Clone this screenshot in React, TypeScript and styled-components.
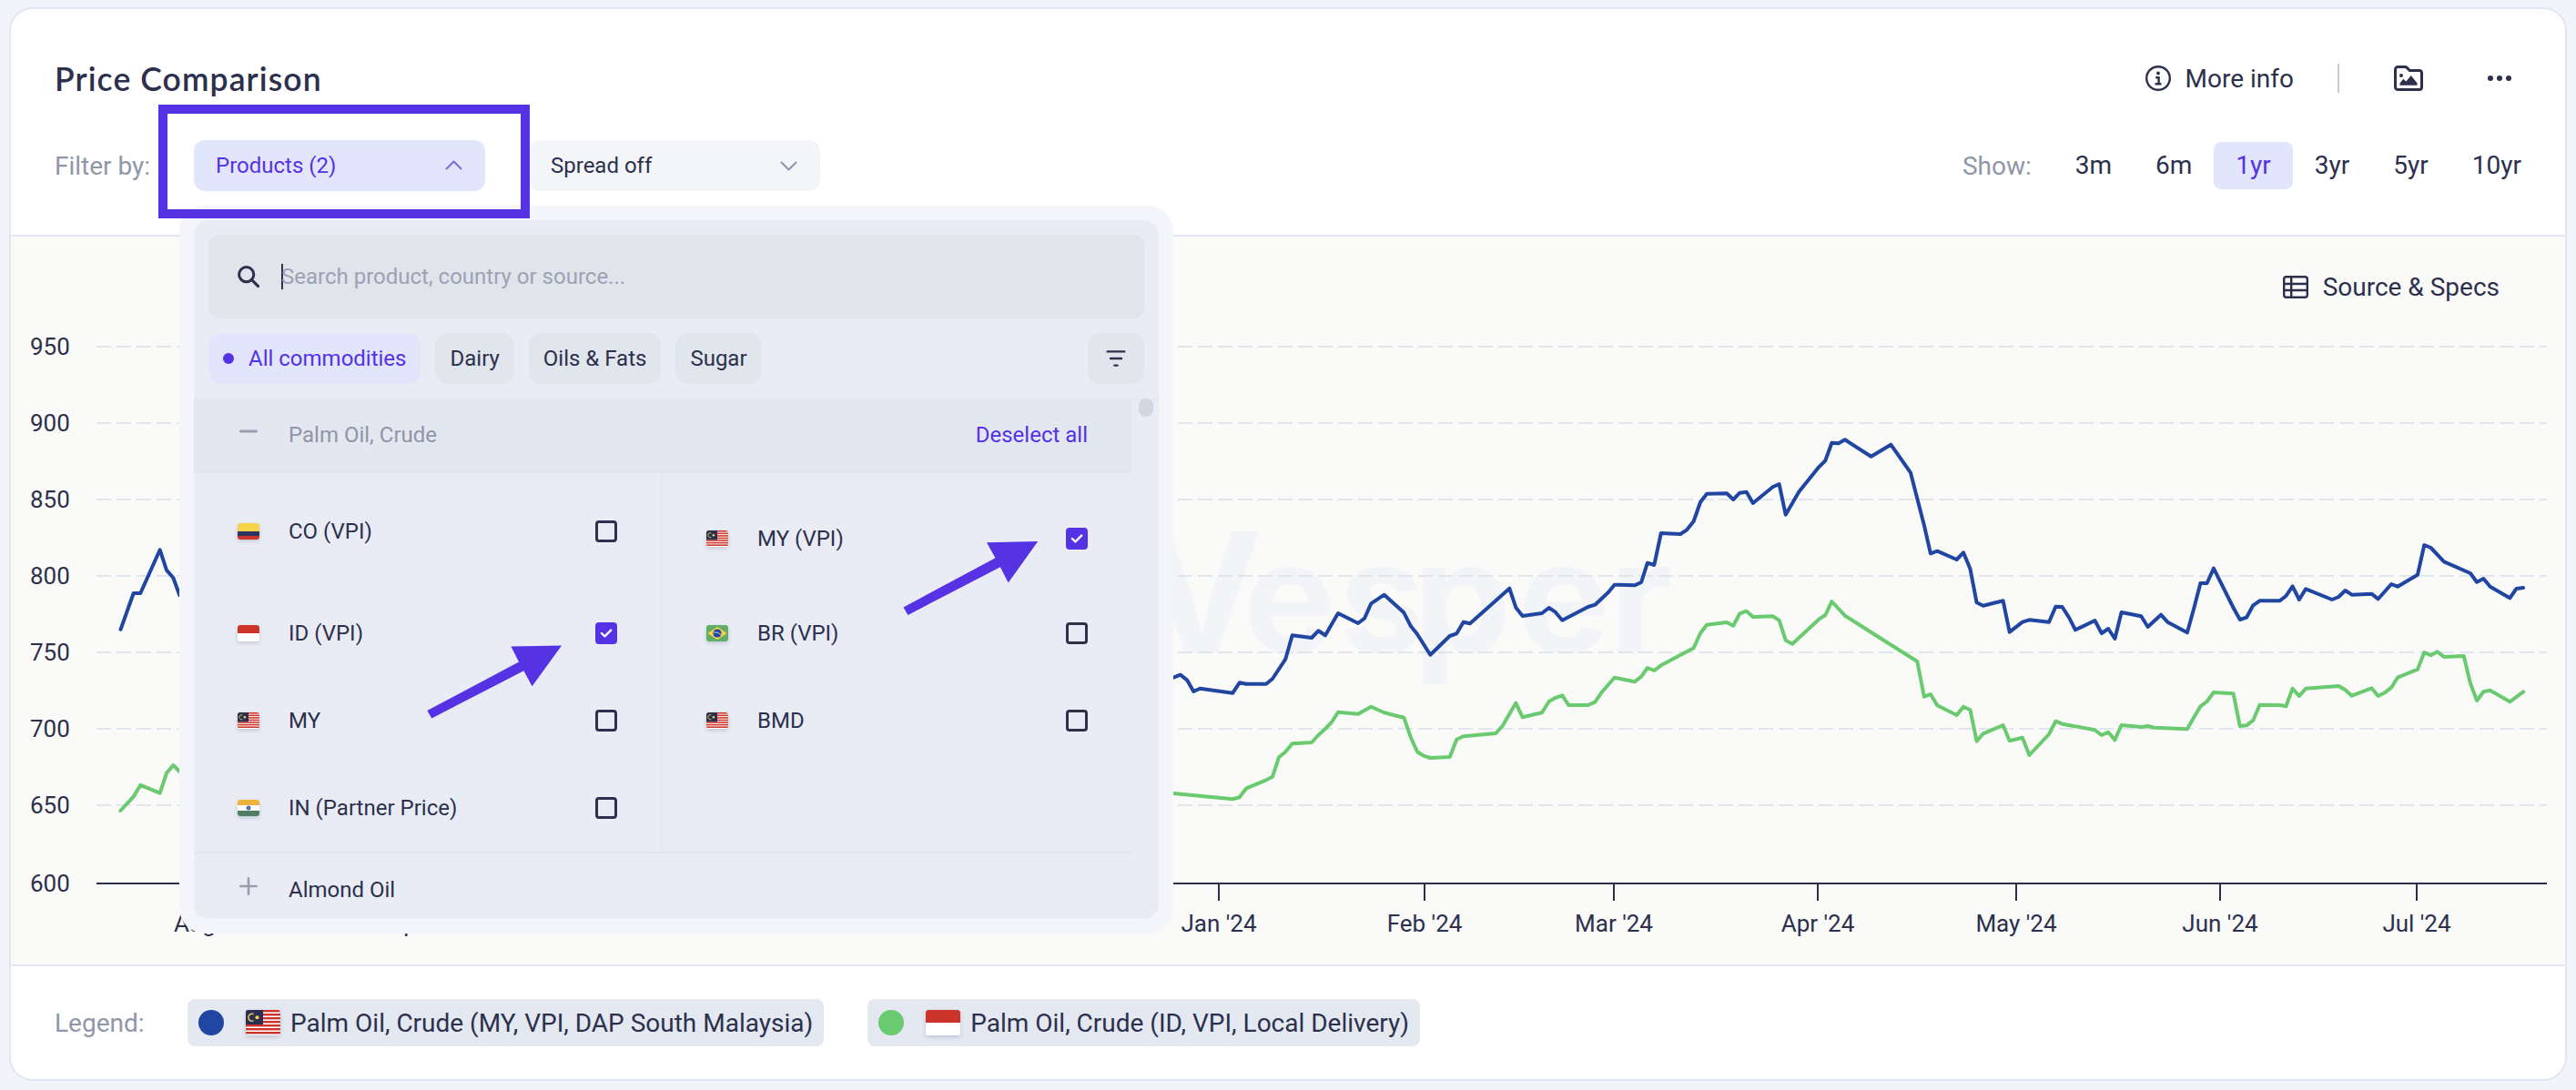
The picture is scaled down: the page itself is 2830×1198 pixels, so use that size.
import React from 'react'
import styled, { createGlobalStyle } from 'styled-components'

const NAVY = '#2c304d'
const PURPLE = '#5632e5'
const MUTED = '#8f96a9'

const GlobalStyle = createGlobalStyle`
  * {
    box-sizing: border-box;
  }
  body {
    margin: 0;
    background: #f3f4f9;
    color: ${NAVY};
    font-family: Roboto, 'Liberation Sans', sans-serif;
    font-size: 28px;
  }
`
const Page = styled.main`
  height: 1198px;
  padding: 8px 10px 10px;
`
const Card = styled.section`
  display: flex;
  flex-direction: column;
  height: 1180px;
  border: 2px solid #e2e6f0;
  border-radius: 26px;
  background: #fff;
`
const Header = styled.header`
  display: flex;
  flex-direction: column;
  gap: 44px;
  height: 250px;
  padding-top: 52px;
  border-bottom: 2px solid #e2e6f0;
`
const TitleRow = styled.div`
  display: flex;
  align-items: center;
  height: 48px;
  padding: 0 59px 0 48px;
`
const Title = styled.h1`
  flex: 1;
  margin: 0;
  font-family: Lato, sans-serif;
  font-weight: 600;
  font-size: 35.5px;
  letter-spacing: 1.1px;
  white-space: nowrap;
`
const MoreInfo = styled.div`
  display: flex;
  align-items: center;
  gap: 16px;
`
const Divider = styled.div`
  width: 2px;
  height: 32px;
  margin: 0 60px 0 48px;
  background: #c6cfd9;
`
const MoreDots = styled.svg`
  margin-left: 71px;
`
const ControlsRow = styled.div`
  display: flex;
  align-items: center;
  height: 56px;
  padding: 0 24px 0 48px;
`
const Label = styled.span<{ width?: number }>`
  width: ${({ width }) => (width ? `${width}px` : 'auto')};
  color: ${MUTED};
`
const FilterWrap = styled.div`
  position: relative;
  margin-right: 48px;
`
const Select = styled.div<{ active?: boolean }>`
  display: flex;
  align-items: center;
  justify-content: space-between;
  width: 320px;
  height: 56px;
  padding: 0 25px 0 24px;
  border-radius: 12px;
  font-size: 24px;
  background: ${({ active }) => (active ? '#e2e6fd' : '#f3f5f9')};
  color: ${({ active }) => (active ? PURPLE : NAVY)};
`
const Ranges = styled.div`
  display: flex;
  align-items: center;
  margin-left: auto;
`
const Range = styled.div<{ active?: boolean }>`
  height: 52px;
  padding: 0 24px;
  border-radius: 8px;
  line-height: 52px;
  background: ${({ active }) => (active ? '#e2e6fd' : 'transparent')};
  color: ${({ active }) => (active ? PURPLE : NAVY)};
`
const RangeLabel = styled(Label)`
  margin-right: 24px;
`
const ChartArea = styled.div`
  position: relative;
  height: 802px;
  border-bottom: 2px solid #e2e6f0;
  background: #fafaf8;
`
const ChartSvg = styled.svg`
  display: block;
  width: 2806px;
  height: 800px;
  font-size: 26px;
`
const SourceLink = styled.div`
  position: absolute;
  top: 35px;
  right: 72px;
  display: flex;
  align-items: center;
  gap: 16px;
  height: 40px;
`
const Legend = styled.footer`
  display: flex;
  align-items: center;
  height: 124px;
  padding: 0 48px;
  gap: 48px;
`
const LegendChip = styled.div`
  display: flex;
  align-items: center;
  height: 52px;
  padding: 0 12px;
  border-radius: 8px;
  background: #e4e8f1;
  white-space: nowrap;
`
const Dot = styled.span<{ size: number; color: string }>`
  width: ${({ size }) => size}px;
  height: ${({ size }) => size}px;
  border-radius: 50%;
  background: ${({ color }) => color};
`
const LegendFlag = styled.div`
  display: flex;
  margin: 0 11px 0 24px;
`

/* product picker */
const Dropdown = styled.div`
  position: absolute;
  z-index: 2;
  top: 72px;
  left: -16px;
  width: 1092px;
  height: 800px;
  padding: 16px;
  border-radius: 28px;
  background: #f3f5fa;
  font-size: 24px;
`
const Panel = styled.div`
  height: 768px;
  overflow: hidden;
  border-radius: 16px;
  background: #e9ecf5;
`
const PanelTop = styled.div`
  display: flex;
  flex-direction: column;
  gap: 16px;
  padding: 16px;
`
const Search = styled.div`
  display: flex;
  align-items: center;
  height: 92px;
  padding: 0 32px;
  border-radius: 12px;
  background: #e0e4eb;
`
const Caret = styled.span`
  width: 2px;
  height: 28px;
  margin: 0 -2px 0 24px;
  background: ${NAVY};
`
const Placeholder = styled.span`
  color: #9ca2b5;
`
const Tags = styled.div`
  display: flex;
  gap: 16px;
`
const Tag = styled.div<{ active?: boolean }>`
  display: flex;
  align-items: center;
  gap: 16px;
  height: 56px;
  padding: 0 16px;
  border-radius: 14px;
  white-space: nowrap;
  background: ${({ active }) => (active ? '#e2e6fd' : '#e1e5ec')};
  color: ${({ active }) => (active ? PURPLE : NAVY)};
`
const SortButton = styled(Tag)`
  justify-content: center;
  width: 62px;
  margin-left: auto;
`
const ListArea = styled.div`
  display: flex;
`
const List = styled.div`
  width: 1030px;
`
const Track = styled.div`
  flex: 1;
  padding-left: 8px;
  border-top: 2px solid #e3e7f0;
`
const Thumb = styled.div`
  width: 16px;
  height: 20px;
  margin-top: -2px;
  border-radius: 8px;
  background: #cfd7e0;
`
const GroupRow = styled.div<{ open?: boolean }>`
  display: flex;
  align-items: center;
  height: ${({ open }) => (open ? 82 : 80)}px;
  padding: 0 48px;
  border-bottom: ${({ open }) => (open ? '2px solid #e1e5ee' : 'none')};
  background: ${({ open }) => (open ? '#e3e7ef' : 'transparent')};
  color: ${({ open }) => (open ? MUTED : NAVY)};
`
const GroupIcon = styled.svg`
  margin: 0 32px 8px 0;
`
const Deselect = styled.span`
  margin-left: auto;
  color: ${PURPLE};
`
const Columns = styled.div`
  display: grid;
  grid-template-columns: 1fr 1fr;
  border-bottom: 2px solid #e1e5ee;
`
const Column = styled.div<{ divided?: boolean }>`
  display: grid;
  grid-template-rows: 128px 96px 96px 96px;
  border-right: ${({ divided }) => (divided ? '2px solid #e2e6ef' : 'none')};
`
const Product = styled.div<{ offset?: number }>`
  display: flex;
  align-items: center;
  padding: ${({ offset }) => offset || 0}px 48px 0;
`
const ProductName = styled.span`
  flex: 1;
  padding-left: 32px;
`
const Box = styled.span<{ checked?: boolean }>`
  display: flex;
  width: 24px;
  height: 24px;
  border: 3px solid ${({ checked }) => (checked ? PURPLE : NAVY)};
  border-radius: 4px;
  background: ${({ checked }) => (checked ? PURPLE : 'transparent')};
`
const FlagSvg = styled.svg`
  display: block;
  border-radius: 3px;
  box-shadow: 0 2px 4px rgba(60, 80, 110, 0.22);
`

/* annotations drawn over the page */
const Highlight = styled.div`
  position: absolute;
  z-index: 3;
  top: -39px;
  left: -39px;
  width: 408px;
  height: 125px;
  border: 10px solid ${PURPLE};
`
const Arrow = styled.svg<{ x: number; y: number }>`
  position: absolute;
  z-index: 3;
  left: ${({ x }) => x}px;
  top: ${({ y }) => y}px;
  fill: ${PURPLE};
`

type Country = 'CO' | 'ID' | 'MY' | 'IN' | 'BR'

const flags: Record<Country, React.ReactNode> = {
  CO: (
    <>
      <rect width="24" height="9" fill="#f6d349" />
      <rect y="9" width="24" height="5" fill="#2c3560" />
      <rect y="14" width="24" height="4" fill="#cc3429" />
    </>
  ),
  ID: (
    <>
      <rect width="24" height="18" fill="#fff" />
      <rect width="24" height="9" fill="#cc3429" />
    </>
  ),
  MY: (
    <>
      <rect width="24" height="18" fill="#fff" />
      {[0, 1, 2, 3, 4, 5, 6].map((i) => (
        <rect key={i} y={i * 2.57} width="24" height="1.55" fill="#cc3429" />
      ))}
      <rect width="12" height="10.3" fill="#2b3050" />
      <path d="M5.4 2.9 A2.6 2.6 0 1 0 5.4 7.7" fill="none" stroke="#e8cf62" strokeWidth="0.9" />
      <circle cx="7.9" cy="5.3" r="1.3" fill="#f6d349" />
    </>
  ),
  IN: (
    <>
      <rect width="24" height="18" fill="#fff" />
      <rect width="24" height="6" fill="#efb13c" />
      <rect y="12" width="24" height="6" fill="#4f7f62" />
      <circle cx="12" cy="9" r="2" fill="#6f83b5" stroke="#2c4a8c" strokeWidth="1" />
    </>
  ),
  BR: (
    <>
      <rect width="24" height="18" fill="#63ad68" />
      <path d="M12 2 L22.5 9 L12 16 L1.5 9 Z" fill="#f6d349" />
      <circle cx="12" cy="9" r="4.6" fill="#2145a0" />
      <path d="M8.2 8 Q12 7 15.8 10.5" fill="none" stroke="#c9d6f0" strokeWidth="1" />
    </>
  ),
}

const Flag: React.FC<{ country: Country; width?: number; height?: number }> = ({ country, width = 24, height = 18 }) => (
  <FlagSvg width={width} height={height} viewBox="0 0 24 18" preserveAspectRatio="none">
    {flags[country]}
  </FlagSvg>
)

const Checkbox: React.FC<{ checked?: boolean }> = ({ checked }) => (
  <Box checked={checked}>
    {checked && (
      <svg width="18" height="18" viewBox="0 0 18 18">
        <path d="M3.9 9 L7.4 12.3 L14.2 5.6" fill="none" stroke="#fff" strokeWidth="2.4" strokeLinecap="round" strokeLinejoin="round" />
      </svg>
    )}
  </Box>
)

const leftProducts: { country: Country; name: string; checked?: boolean }[] = [
  { country: 'CO', name: 'CO (VPI)' },
  { country: 'ID', name: 'ID (VPI)', checked: true },
  { country: 'MY', name: 'MY' },
  { country: 'IN', name: 'IN (Partner Price)' },
]
const rightProducts: { country: Country; name: string; checked?: boolean; offset?: number }[] = [
  { country: 'MY', name: 'MY (VPI)', checked: true, offset: 16 },
  { country: 'BR', name: 'BR (VPI)' },
  { country: 'MY', name: 'BMD' },
]

const gridLines = [
  { value: 950, y: 381 },
  { value: 900, y: 465 },
  { value: 850, y: 549 },
  { value: 800, y: 633 },
  { value: 750, y: 717 },
  { value: 700, y: 801 },
  { value: 650, y: 885 },
]
const months = [
  { name: "Aug '23", x: 234 },
  { name: "Sep '23", x: 456 },
  { name: "Jan '24", x: 1339 },
  { name: "Feb '24", x: 1565 },
  { name: "Mar '24", x: 1773 },
  { name: "Apr '24", x: 1997 },
  { name: "May '24", x: 2215 },
  { name: "Jun '24", x: 2439 },
  { name: "Jul '24", x: 2655 },
]

const malaysia =
  '132.5,691.8 146.7,652 154.3,652 175.7,604.3 183,626.6 190.3,635 197.3,654.3 1289.3,744.7 1296.7,741.7 1304,747.3 1311.3,760 ' +
  '1318.3,756.7 1354.3,761.7 1361.7,750.3 1369.3,751.7 1391,751.7 1398,746 1412.3,724.3 1419.7,698.3 1441,701 1448.3,693.3 ' +
  '1456,698.3 1470,674 1492,685 1499,679.7 1506.3,663.3 1520.7,653.7 1542.3,673.3 1550,688.3 1557,697 1571.3,719.7 1592.7,699 ' +
  '1600.3,696.3 1607.7,683.7 1615,685.3 1658.3,646.7 1665.3,667.7 1672.7,677 1694,674 1701.7,668 1708.7,672.7 1716.3,681.7 ' +
  '1744.7,667 1752.3,664.7 1766.7,651.3 1773.7,642.7 1795.7,643.3 1803.1,640 1809.9,618.7 1817.3,621 1824.8,586 1846.1,587 ' +
  '1853.2,582.3 1860.6,573 1868,552 1875.1,542.7 1897.1,542.3 1904.2,549 1911.3,541.7 1918.7,540.7 1925.8,553 1947.5,535.3 ' +
  '1954.6,532 1961.7,565.7 1976.5,540.3 1998.2,513.3 2005.3,506.3 2012.4,486.7 2019.8,487.3 2026.9,483.3 2055.6,501.7 ' +
  '2077.3,488.7 2098.9,519.3 2114.1,578.3 2120.9,608.3 2128.3,605.7 2149.6,615 2157,607.3 2164.5,625.3 2171.6,662.3 ' +
  '2178.7,665.7 2200.6,660.3 2207.7,694.7 2221.9,683.7 2229.4,681.3 2251,683.7 2258.4,666.7 2265.5,667 2273,678.7 2280,692.3 ' +
  '2301.4,682 2308.9,696 2316.2,691 2323.4,702 2330.6,673 2352.3,677.3 2359.6,689 2374,675.7 2381.3,683.7 2402.9,695.3 ' +
  '2410.5,667.7 2417.4,641 2424.6,641 2431.9,624.7 2453.6,668 2460.8,681 2468,678.7 2475.3,665.3 2482.5,660.3 2504.5,660.3 ' +
  '2511.4,655 2518.6,644.3 2525.9,659 2533.1,647.3 2562,659 2569.3,656 2576.5,649 2583.7,653.7 2605.4,652.7 2612.7,658.3 ' +
  '2627.1,642 2634,644.7 2656,631.7 2663.3,599 2670.5,602 2685,617.3 2713.9,630 2721.1,639.7 2728.4,636 2735.6,644.7 ' +
  '2757.3,657.3 2764.5,647 2772.1,646'
const indonesia =
  '132.3,891 146.7,875.7 154.3,862.8 175.7,871.7 183,849.8 190.3,841 197.3,848 1289.3,872 1354.3,878.3 1361.7,876.3 ' +
  '1369.3,866.3 1391,857.3 1398,853.7 1405,832.3 1412.3,826.3 1419.7,817.3 1441,816 1448.3,808 1456,801 1463.3,793.3 ' +
  '1470,782.7 1492,784.7 1506.3,776.7 1520.7,783.3 1542.3,788.7 1550,810.7 1557,826.3 1564,830.7 1571.3,833 1592.7,832 ' +
  '1600.3,812.7 1607.7,809.3 1643.3,806 1651,797.3 1665.3,772.7 1672.7,788.3 1694,783.3 1701.7,771 1708.7,767 1716.3,764.3 ' +
  '1723.3,775 1744.7,775 1752.3,771.7 1759.3,761.3 1773.7,744.7 1795.7,749.3 1803.1,743.7 1809.9,734 1817.3,737 1824.8,731.3 ' +
  '1860.6,712.3 1868,696 1875.1,686.7 1897.1,684 1904.2,687.7 1911.3,674.3 1918.7,671.7 1925.8,678 1947.5,677.3 1954.6,681.7 ' +
  '1961.7,703.7 1969.1,707.7 1998.2,680.7 2005.3,676 2012.4,661 2019.8,669 2026.9,676.7 2055.6,695 2106.3,727 2113.8,765.7 ' +
  '2120.9,763 2128.3,775.3 2149.6,786 2157,776.7 2164.5,780.3 2171.6,814.7 2178.7,806.3 2200.6,797 2207.7,814.3 2221.9,810.7 ' +
  '2229.4,830 2251,807 2258.4,792.7 2265.5,795.7 2301.4,802.3 2308.9,808 2316.2,804.7 2323.4,813.3 2330.6,797 2352.3,799 ' +
  '2359.6,798 2366.8,799.7 2402.9,801.3 2410.5,788 2417.4,776.3 2424.6,771 2431.9,761 2453.6,762.3 2460.8,798 2468,797.3 ' +
  '2475.3,791.7 2482.5,774.7 2504.5,775 2511.4,776.3 2518.6,756.7 2525.9,765 2533.1,756.7 2569.3,754 2576.5,758.3 ' +
  '2583.7,764.7 2605.4,756.3 2612.7,765 2619.9,761.3 2627.1,755.7 2634,744.7 2656,735.7 2663.3,717 2670.5,720.3 2677.7,716.3 ' +
  '2685,722 2706.7,721 2713.9,750.7 2721.1,770 2728.4,760.3 2735.6,758.7 2757.3,771.3 2772.1,760.3'

const Chart: React.FC = () => (
  <ChartSvg viewBox="12 260 2806 800">
    {/* watermark */}
    <text x="1251 1366 1471 1553 1667 1768" y="717" fontFamily="Inter, sans-serif" fontWeight="700" fontSize="170" fill="#f2f4f8">
      <tspan fontSize="183">V</tspan>esper
    </text>
    {gridLines.map(({ value, y }) => (
      <g key={value}>
        <text x="33" y={y + 9} fill={NAVY}>{value}</text>
        <line x1="106" x2="2798" y1={y} y2={y} stroke="#e1e6ee" strokeWidth="2" strokeDasharray="16 6" />
      </g>
    ))}
    <text x="33" y="980" fill={NAVY}>600</text>
    <line x1="106" x2="2798" y1="971" y2="971" stroke={NAVY} strokeWidth="2" />
    {months.map(({ name, x }) => (
      <g key={name}>
        <line x1={x} x2={x} y1="972" y2="990" stroke={NAVY} strokeWidth="2" />
        <text x={x} y="1024" textAnchor="middle" fill={NAVY}>{name}</text>
      </g>
    ))}
    <g fill="none" strokeWidth="4" strokeLinejoin="round" strokeLinecap="round">
      <polyline points={indonesia} stroke="#69ca6f" />
      <polyline points={malaysia} stroke="#2046a2" />
    </g>
  </ChartSvg>
)

const ProductPicker: React.FC = () => (
  <Dropdown>
    <Panel>
      <PanelTop>
        <Search>
          <svg width="24" height="24" viewBox="0 0 24 24" fill="none" stroke={NAVY} strokeWidth="3">
            <circle cx="9.7" cy="9.7" r="8.1" />
            <path d="M15.4 15.4 L22.6 22.6" strokeLinecap="round" />
          </svg>
          <Caret />
          <Placeholder>Search product, country or source...</Placeholder>
        </Search>
        <Tags>
          <Tag active><Dot size={12} color={PURPLE} />All commodities</Tag>
          <Tag>Dairy</Tag>
          <Tag>Oils & Fats</Tag>
          <Tag>Sugar</Tag>
          <SortButton>
            <svg width="24" height="20" viewBox="0 0 24 20" stroke={NAVY} strokeWidth="2.4" strokeLinecap="round">
              <path d="M2.7 2.4 H21.3 M6 10 H18 M10.4 17.6 H13.6" />
            </svg>
          </SortButton>
        </Tags>
      </PanelTop>
      <ListArea>
        <List>
          <GroupRow open>
            <GroupIcon width="24" height="24" viewBox="0 0 24 24" stroke="#979eaf" strokeWidth="3" strokeLinecap="round">
              <path d="M3.5 12 H20.5" />
            </GroupIcon>
            Palm Oil, Crude
            <Deselect>Deselect all</Deselect>
          </GroupRow>
          <Columns>
            <Column divided>
              {leftProducts.map(({ country, name, checked }) => (
                <Product key={name}>
                  <Flag country={country} />
                  <ProductName>{name}</ProductName>
                  <Checkbox checked={checked} />
                </Product>
              ))}
            </Column>
            <Column>
              {rightProducts.map(({ country, name, checked, offset }) => (
                <Product key={name} offset={offset}>
                  <Flag country={country} />
                  <ProductName>{name}</ProductName>
                  <Checkbox checked={checked} />
                </Product>
              ))}
            </Column>
          </Columns>
          <GroupRow>
            <GroupIcon width="24" height="24" viewBox="0 0 24 24" stroke="#979eaf" strokeWidth="2.6" strokeLinecap="round">
              <path d="M3.3 12 H20.7 M12 3.3 V20.7" />
            </GroupIcon>
            Almond Oil
          </GroupRow>
        </List>
        <Track>
          <Thumb />
        </Track>
      </ListArea>
    </Panel>
    <Arrow x={272} y={483} width="150" height="82" viewBox="0 0 150 82">
      <path d="M148 0.5 L92.4 1.4 L101 18.6 L0.3 72 L5.3 80.5 L106.4 28.3 L115.6 45.2 Z" />
    </Arrow>
    <Arrow x={795} y={368} width="150" height="84" viewBox="0 0 150 84">
      <path d="M148.2 1 L92 2.3 L101.5 19.2 L0.5 73.5 L5.5 81.9 L106.9 29.3 L115.7 46.5 Z" />
    </Arrow>
  </Dropdown>
)

const App: React.FC = () => (
  <Page>
    <GlobalStyle />
    <Card>
      <Header>
        <TitleRow>
          <Title>Price Comparison</Title>
          <MoreInfo>
            <svg width="28" height="28" viewBox="0 0 28 28" fill="none" stroke={NAVY}>
              <circle cx="14" cy="14" r="12.8" strokeWidth="2.4" />
              <circle cx="14" cy="8.5" r="1.9" fill={NAVY} stroke="none" />
              <path d="M11.2 13.2 H14.6 V20 M10.6 20.2 H17.4" strokeWidth="2.4" />
            </svg>
            More info
          </MoreInfo>
          <Divider />
          <svg width="32" height="28" viewBox="0 0 32 28">
            <path d="M4.5 1.5 H12.2 C13 1.5 13.6 1.8 14.2 2.4 L17.3 5.5 H27.5 C29.3 5.5 30.5 6.7 30.5 8.3 V23.7 C30.5 25.3 29.3 26.5 27.5 26.5 H4.5 C2.7 26.5 1.5 25.3 1.5 23.7 V4.3 C1.5 2.7 2.7 1.5 4.5 1.5 Z" fill="none" stroke={NAVY} strokeWidth="3" />
            <circle cx="8" cy="11" r="2" fill={NAVY} />
            <path d="M6.5 21.8 V19.6 L10.3 14.8 L13.3 17.6 L18.8 11 L25.6 19.6 V21.8 Z" fill={NAVY} />
          </svg>
          <MoreDots width="26" height="6" viewBox="0 0 26 6" fill={NAVY}>
            <circle cx="3" cy="3" r="3" />
            <circle cx="13" cy="3" r="3" />
            <circle cx="23" cy="3" r="3" />
          </MoreDots>
        </TitleRow>
        <ControlsRow>
          <Label width={153}>Filter by:</Label>
          <FilterWrap>
            <Select active>
              Products (2)
              <svg width="19" height="12" viewBox="0 0 19 12" fill="none" stroke="#7d6be4" strokeWidth="2" strokeLinecap="round" strokeLinejoin="round">
                <path d="M1.5 9.5 L9.5 1.5 L17.5 9.5" />
              </svg>
            </Select>
            <ProductPicker />
            <Highlight />
          </FilterWrap>
          <Select>
            Spread off
            <svg width="19" height="12" viewBox="0 0 19 12" fill="none" stroke="#8f96a9" strokeWidth="2" strokeLinecap="round" strokeLinejoin="round">
              <path d="M1.5 2.5 L9.5 10.5 L17.5 2.5" />
            </svg>
          </Select>
          <Ranges>
            <RangeLabel>Show:</RangeLabel>
            {['3m', '6m', '1yr', '3yr', '5yr', '10yr'].map((range) => (
              <Range key={range} active={range === '1yr'}>{range}</Range>
            ))}
          </Ranges>
        </ControlsRow>
      </Header>
      <ChartArea>
        <Chart />
        <SourceLink>
          <svg width="28" height="25" viewBox="0 0 28 25" fill="none" stroke={NAVY} strokeWidth="2.4">
            <rect x="1.2" y="1.2" width="25.6" height="22.6" rx="2.5" />
            <path d="M9.2 1.2 V23.8 M1.2 9 H26.8 M1.2 16 H26.8" />
          </svg>
          Source & Specs
        </SourceLink>
      </ChartArea>
      <Legend>
        <Label width={98}>Legend:</Label>
        <LegendChip>
          <Dot size={28} color="#2046a2" />
          <LegendFlag><Flag country="MY" width={38} height={28} /></LegendFlag>
          Palm Oil, Crude (MY, VPI, DAP South Malaysia)
        </LegendChip>
        <LegendChip>
          <Dot size={28} color="#69ca6f" />
          <LegendFlag><Flag country="ID" width={38} height={28} /></LegendFlag>
          Palm Oil, Crude (ID, VPI, Local Delivery)
        </LegendChip>
      </Legend>
    </Card>
  </Page>
)

export default App
